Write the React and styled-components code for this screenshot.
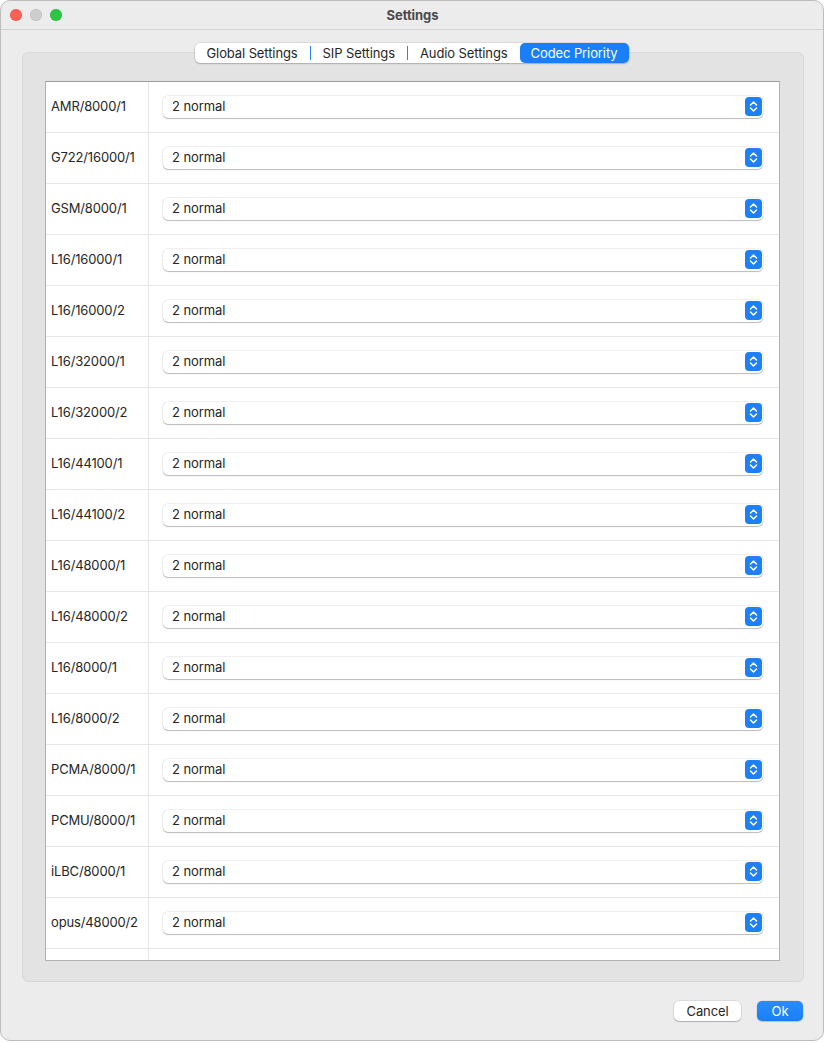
import React from "react";
import styled, { createGlobalStyle } from "styled-components";

const Global = createGlobalStyle`
  html, body { margin: 0; padding: 0; background: #ffffff; }
  body { font-family: Inter, "Liberation Sans", sans-serif; font-size: 13px; color: #262626; }
  * { box-sizing: border-box; }
`;

const Window = styled.div`
  width: 824px;
  height: 1041px;
  background: #ececec;
  border: 1px solid #bdbdbd;
  border-radius: 10px;
  overflow: hidden;
  display: flex;
  flex-direction: column;
`;

const TitleBar = styled.div`
  height: 29px;
  flex: none;
  border-bottom: 1px solid #d4d4d4;
  display: grid;
  grid-template-columns: 1fr auto 1fr;
  align-items: center;
  padding: 0 9px 1px;
`;

const Lights = styled.div`
  display: flex;
  gap: 8px;
`;

const Light = styled.span`
  width: 12px;
  height: 12px;
  border-radius: 50%;
  background: ${(p) => p.$c};
  box-shadow: inset 0 0 0 0.5px rgba(0, 0, 0, 0.12);
`;

const Title = styled.div`
  font-weight: 700;
  font-size: 13px;
  color: #4a4a4a;
  letter-spacing: -0.05px;
  margin-left: 1px;
`;

const Body = styled.div`
  flex: 1;
  display: flex;
  flex-direction: column;
  padding: 13px 19px 19px 21px;
  min-height: 0;
`;

const TabBar = styled.div`
  align-self: center;
  display: flex;
  height: 20px;
  margin-bottom: -11px;
  margin-left: -3px;
  position: relative;
  z-index: 1;
  background: #ffffff;
  border-radius: 5px;
  box-shadow: 0 0 0 0.5px rgba(0, 0, 0, 0.14), 0 1px 1.5px rgba(0, 0, 0, 0.18);
`;

const Tab = styled.div`
  display: flex;
  align-items: center;
  padding: 0 ${(p) => (p.$active ? 11 : 12)}px 1px;
  font-size: 13px;
  letter-spacing: -0.1px;
  color: ${(p) => (p.$active ? "#ffffff" : "#262626")};
  background: ${(p) => (p.$active ? "#1a7ff6" : "transparent")};
  border-radius: ${(p) => (p.$active ? "5px" : "0")};
  border-left: ${(p) => (p.$sep ? "1.5px solid #2a83f2" : "none")};
  margin: ${(p) => (p.$sep ? "3px 0" : "0")};
`;

const Group = styled.div`
  flex: 1;
  min-height: 0;
  background: #e3e3e3;
  border: 1px solid #d8d8d8;
  border-radius: 6px;
  padding: 28px 23px 20px 22px;
  display: flex;
  flex-direction: column;
`;

const Table = styled.div`
  flex: 1;
  min-height: 0;
  background: #ffffff;
  border: 1px solid #b2b2b2;
  border-top-color: #9c9c9c;
  overflow: hidden;
`;

const Row = styled.div`
  display: grid;
  grid-template-columns: 103px 1fr;
  height: 51px;
  border-bottom: 1px solid #e6e6e6;
`;

const NameCell = styled.div`
  border-right: 1px solid #e6e6e6;
  padding: 0 0 2px 5px;
  display: flex;
  align-items: center;
  font-size: 13px;
  letter-spacing: -0.15px;
  color: #262626;
`;

const ValueCell = styled.div`
  display: flex;
  align-items: center;
  padding: 0 16px 1px 14px;
`;

const Popup = styled.div`
  flex: 1;
  height: 22px;
  background: #ffffff;
  border-radius: 5px;
  box-shadow: 0 0 0 0.5px rgba(0, 0, 0, 0.13), 0 1px 1px rgba(0, 0, 0, 0.22);
  display: flex;
  align-items: center;
  justify-content: space-between;
  padding: 0 1px 1px 9px;
  font-size: 13px;
  letter-spacing: -0.1px;
  color: #262626;
`;

const Stepper = styled.svg`
  display: block;
  flex: none;
  margin-top: 1px;
`;

const Footer = styled.div`
  display: flex;
  justify-content: flex-end;
  gap: 16px;
  padding-top: 19px;
  padding-right: 1px;
`;

const Button = styled.button`
  height: 20px;
  min-width: ${(p) => p.$w}px;
  padding: 0 12px 1px;
  border: none;
  border-radius: 5px;
  font-family: inherit;
  font-size: 13px;
  letter-spacing: -0.1px;
  color: ${(p) => (p.$primary ? "#ffffff" : "#262626")};
  background: ${(p) => (p.$primary ? "linear-gradient(#2a8bfb, #1a7ff6)" : "#ffffff")};
  box-shadow: ${(p) =>
    p.$primary
      ? "0 0 0 0.5px rgba(0,0,0,0.1), 0 1px 1px rgba(0,0,0,0.15)"
      : "0 0 0 0.5px rgba(0,0,0,0.14), 0 1px 1px rgba(0,0,0,0.2)"};
`;

const codecs = [
  "AMR/8000/1",
  "G722/16000/1",
  "GSM/8000/1",
  "L16/16000/1",
  "L16/16000/2",
  "L16/32000/1",
  "L16/32000/2",
  "L16/44100/1",
  "L16/44100/2",
  "L16/48000/1",
  "L16/48000/2",
  "L16/8000/1",
  "L16/8000/2",
  "PCMA/8000/1",
  "PCMU/8000/1",
  "iLBC/8000/1",
  "opus/48000/2",
];

function StepIcon() {
  return (
    <Stepper width="17" height="19" viewBox="0 0 17 19">
      <rect x="0" y="0" width="17" height="19" rx="4" fill="#1f7ff6" />
      <path d="M5.5 8 L8.5 5 L11.5 8" fill="none" stroke="#fff" strokeWidth="1.5" strokeLinecap="round" strokeLinejoin="round" />
      <path d="M5.5 11 L8.5 14 L11.5 11" fill="none" stroke="#fff" strokeWidth="1.5" strokeLinecap="round" strokeLinejoin="round" />
    </Stepper>
  );
}

export default function App() {
  return (
    <>
      <Global />
      <Window>
        <TitleBar>
          <Lights>
            <Light $c="#fe5f57" />
            <Light $c="#cecece" />
            <Light $c="#2ac840" />
          </Lights>
          <Title>Settings</Title>
          <div />
        </TitleBar>
        <Body>
          <TabBar>
            <Tab>Global Settings</Tab>
            <Tab $sep>SIP Settings</Tab>
            <Tab $sep>Audio Settings</Tab>
            <Tab $active>Codec Priority</Tab>
          </TabBar>
          <Group>
            <Table>
              {codecs.map((c) => (
                <Row key={c}>
                  <NameCell>{c}</NameCell>
                  <ValueCell>
                    <Popup>
                      <span>2 normal</span>
                      <StepIcon />
                    </Popup>
                  </ValueCell>
                </Row>
              ))}
              <Row>
                <NameCell />
                <ValueCell />
              </Row>
            </Table>
          </Group>
          <Footer>
            <Button $w={67}>Cancel</Button>
            <Button $w={46} $primary>Ok</Button>
          </Footer>
        </Body>
      </Window>
    </>
  );
}
